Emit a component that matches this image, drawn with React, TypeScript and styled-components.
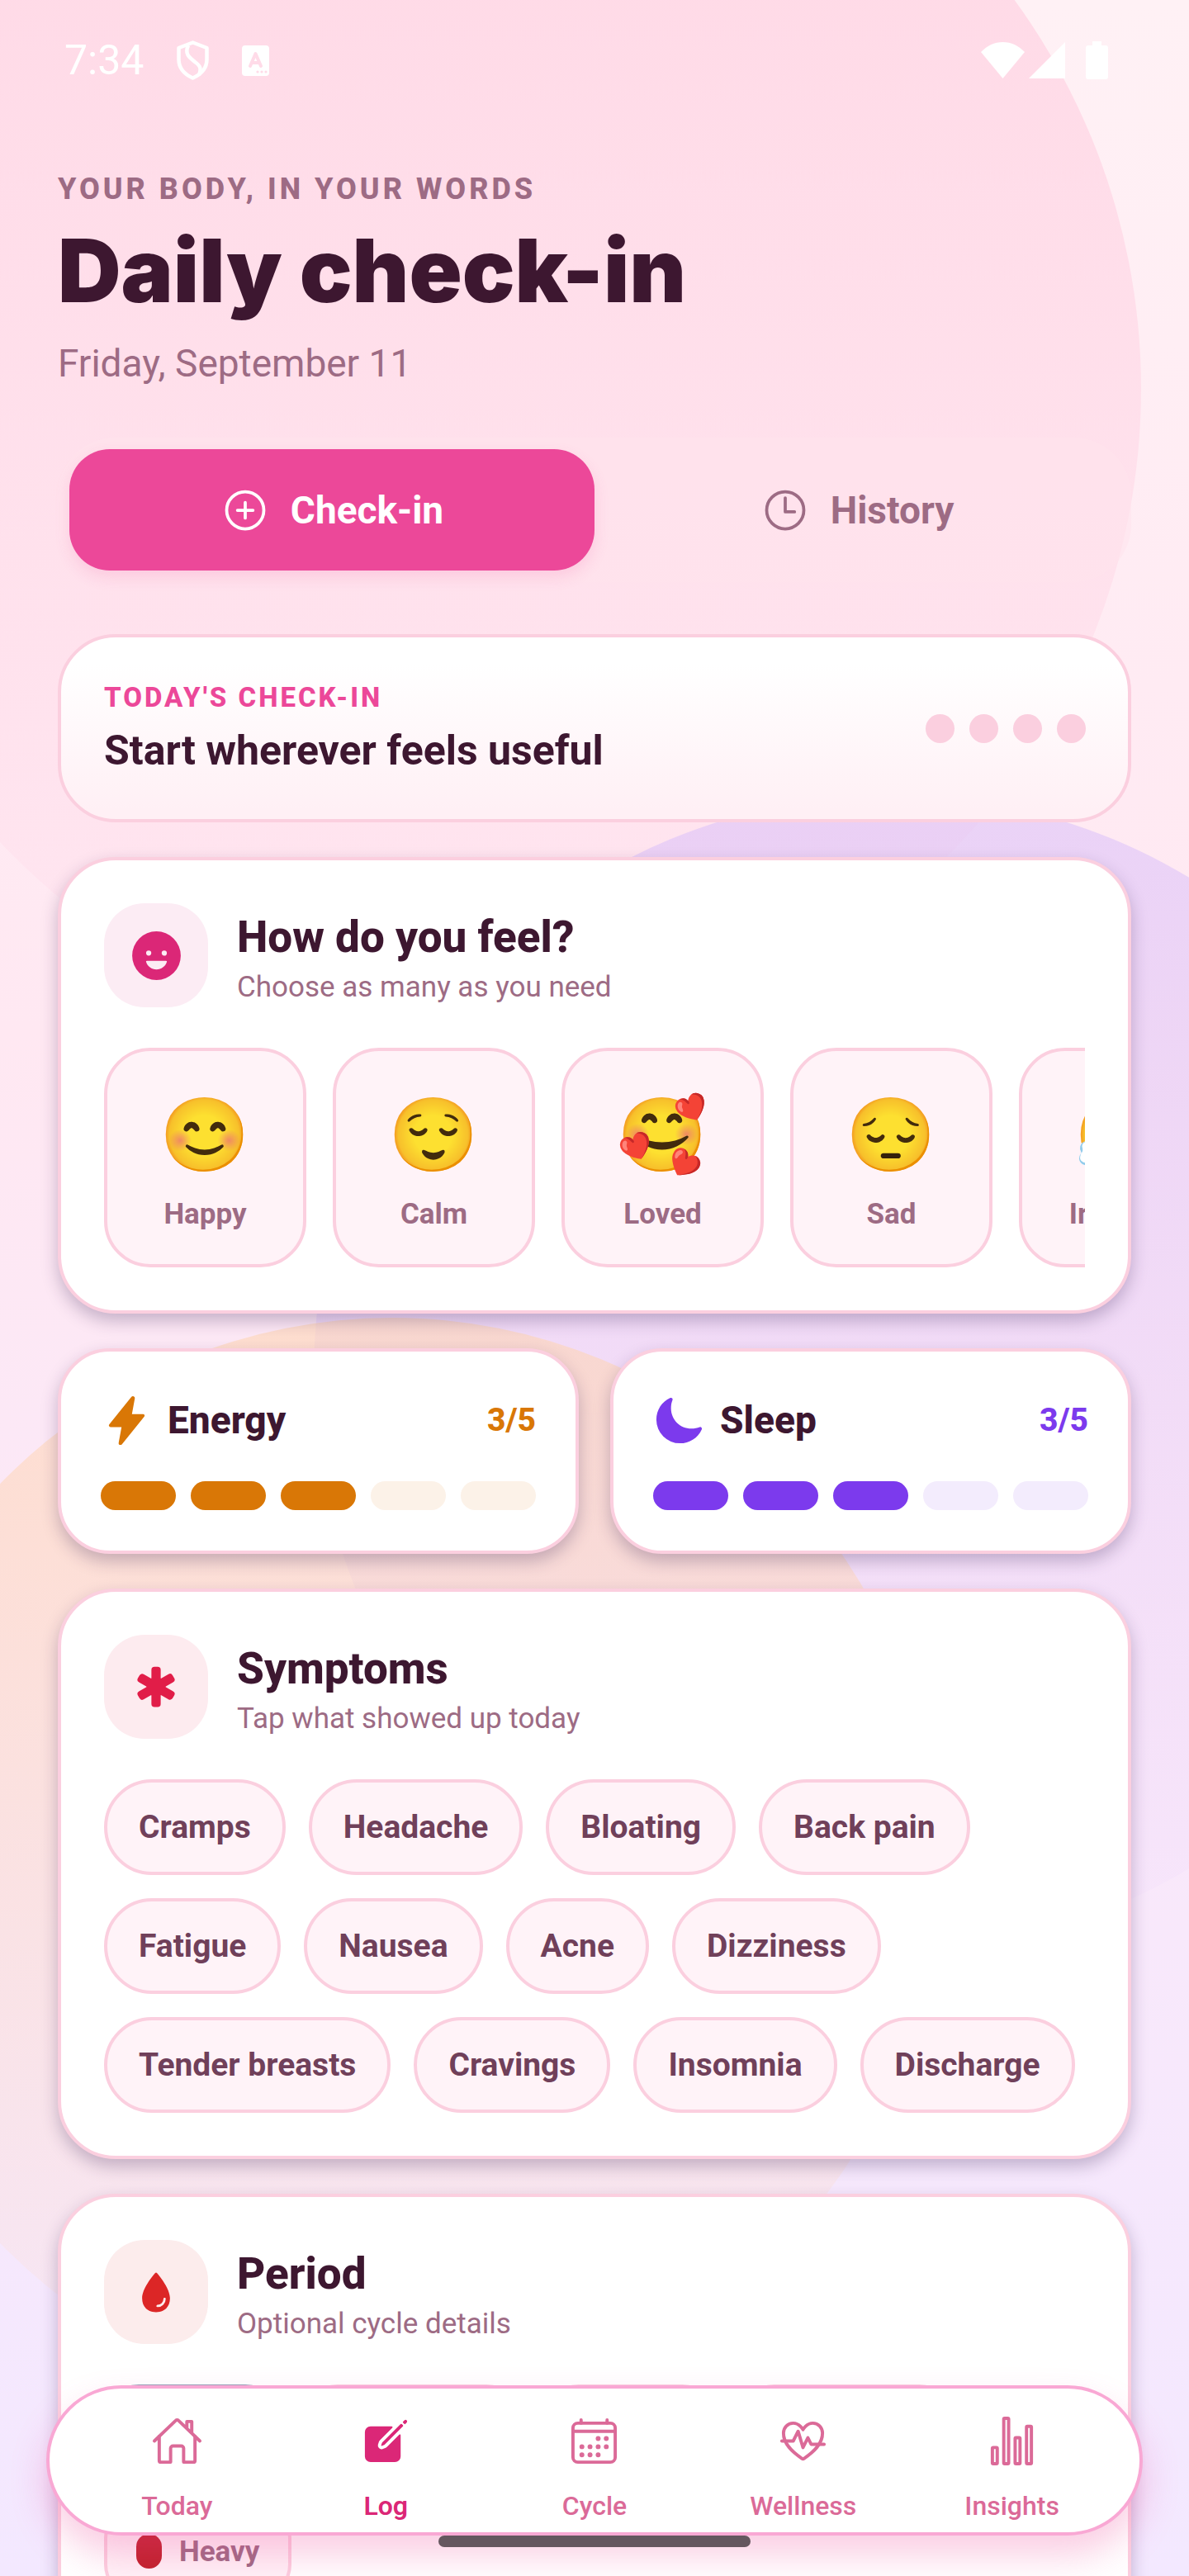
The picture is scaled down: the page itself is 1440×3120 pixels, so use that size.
import React from "react";
import styled, { createGlobalStyle } from "styled-components";
import {
  IoAddCircleOutline,
  IoTimeOutline,
  IoHappy,
  IoFlash,
  IoMoon,
  IoMedical,
  IoWater,
  IoHomeOutline,
  IoCreate,
  IoCalendarOutline,
  IoFitnessOutline,
  IoStatsChartOutline,
} from "react-icons/io5";

const ink = "#3d1730";
const muted = "#9d6b84";
const line = "#fbcfdf";
const blush = "#fff3f8";
const lift = "0 9px 20px rgba(50, 30, 80, 0.27)";

const GlobalStyle = createGlobalStyle`
  *, *::before, *::after { box-sizing: border-box; }
  body {
    margin: 0;
    font-family: Roboto, "Liberation Sans", sans-serif;
    color: ${ink};
  }
  button { font: inherit; color: inherit; border: 0; background: none; padding: 0; cursor: pointer; }
  h1, h2, p { margin: 0; }
  svg { display: block; flex: none; }
`;

const Screen = styled.div`
  position: relative;
  height: 100vh;
  overflow: hidden;
  background: linear-gradient(180deg, #fff1f5 0%, #ffe8f2 40%, #f8e8fb 75%, #f3e8ff 100%);
`;

const Blob = styled.div<{ $x: number; $y: number; $size: number; $fill: string }>`
  position: absolute;
  left: ${(p) => p.$x}px;
  top: ${(p) => p.$y}px;
  width: ${(p) => p.$size}px;
  height: ${(p) => p.$size}px;
  border-radius: 50%;
  background: ${(p) => p.$fill};
`;

const StatusBar = styled.header`
  position: relative;
  display: flex;
  justify-content: space-between;
  align-items: center;
  height: 146px;
  padding: 0 98px 0 78px;
  color: #fff;
`;

const StatusGroup = styled.div<{ $gap: number }>`
  display: flex;
  align-items: center;
  gap: ${(p) => p.$gap}px;
`;

const Clock = styled.span`
  font-size: 50px;
  line-height: 60px;
`;

const Content = styled.main`
  position: relative;
  display: flex;
  flex-direction: column;
  gap: 42px;
  padding: 60px 70px 0;
`;

const Heading = styled.div`
  display: flex;
  flex-direction: column;
`;

const Overline = styled.p`
  font-size: 36px;
  line-height: 46px;
  font-weight: 800;
  letter-spacing: 4px;
  color: ${muted};
`;

const Title = styled.h1`
  font-family: Inter, "Liberation Sans", sans-serif;
  font-size: 106px;
  line-height: 128px;
  font-weight: 900;
  margin-top: 12px;
`;

const DateLine = styled.p`
  font-size: 46px;
  line-height: 56px;
  margin-top: 20px;
  color: ${muted};
`;

const Tabs = styled.div`
  display: grid;
  grid-template-columns: 1fr 1fr;
  padding: 14px;
  margin-top: 20px;
  border-radius: 70px;
  background: rgba(255, 228, 236, 0.55);
`;

const Tab = styled.button<{ $on?: boolean }>`
  && {
    display: flex;
    align-items: center;
    justify-content: center;
    gap: 25px;
    height: 147px;
    border-radius: 49px;
    font-size: 46px;
    font-weight: 700;
    color: ${(p) => (p.$on ? "#fff" : muted)};
    background: ${(p) => (p.$on ? "#ec4899" : "transparent")};
    box-shadow: ${(p) => (p.$on ? "0 8px 18px rgba(236, 72, 153, 0.16)" : "none")};
  }
`;

const Summary = styled.section`
  display: flex;
  align-items: center;
  justify-content: space-between;
  height: 228px;
  margin-top: 21px;
  padding: 0 51px 0 52px;
  border: 4px solid ${line};
  border-radius: 70px;
  background: linear-gradient(180deg, #fff 15%, #fff0f5 95%);
`;

const SummaryLabel = styled.p`
  font-size: 33px;
  line-height: 40px;
  font-weight: 800;
  letter-spacing: 3px;
  color: #ec4899;
`;

const SummaryText = styled.p`
  margin-top: 14px;
  font-size: 50px;
  line-height: 60px;
  font-weight: 700;
`;

const Dots = styled.div`
  display: flex;
  gap: 18px;
`;

const Dot = styled.span`
  width: 35px;
  height: 35px;
  border-radius: 50%;
  background: ${line};
`;

const Card = styled.section`
  padding: 52px;
  border: 4px solid ${line};
  border-radius: 70px;
  background: #fff;
  box-shadow: ${lift};
`;

const CardHead = styled.div`
  display: flex;
  align-items: center;
  gap: 35px;
`;

const CardText = styled.div`
  padding-top: 7px;
`;

const Badge = styled.div<{ $fill: string; $color: string }>`
  display: grid;
  place-items: center;
  width: 126px;
  height: 126px;
  border-radius: 49px;
  background: ${(p) => p.$fill};
  color: ${(p) => p.$color};
`;

const CardTitle = styled.h2`
  font-size: 53px;
  line-height: 64px;
  font-weight: 800;
`;

const CardHint = styled.p`
  font-size: 35px;
  line-height: 46px;
  margin-top: 6px;
  color: ${muted};
`;

const MoodRow = styled.div`
  display: flex;
  gap: 32px;
  margin-top: 49px;
  overflow: hidden;
`;

const Mood = styled.button`
  && {
    flex: none;
    display: flex;
    flex-direction: column;
    align-items: center;
    width: 245px;
    height: 266px;
    padding-top: 52px;
    border: 4px solid ${line};
    border-radius: 56px;
    background: ${blush};
    color: ${muted};
    font-size: 35px;
    line-height: 46px;
    font-weight: 700;
  }
`;

const Emoji = styled.span`
  font-family: "Noto Color Emoji", sans-serif;
  font-size: 88px;
  line-height: 100px;
  height: 100px;
  margin-bottom: 23px;
  font-weight: 400;
`;

const Pair = styled.div`
  display: grid;
  grid-template-columns: 1fr 1fr;
  gap: 38px;
`;

const Meter = styled.section`
  padding: 51px 48px 49px;
  border: 4px solid ${line};
  border-radius: 63px;
  background: #fff;
  box-shadow: ${lift};
`;

const MeterHead = styled.div<{ $color: string }>`
  display: flex;
  align-items: center;
  gap: 18px;
  height: 64px;
  color: ${(p) => p.$color};
`;

const MeterTitle = styled.h2`
  flex: 1;
  font-size: 46px;
  line-height: 56px;
  font-weight: 800;
  color: ${ink};
`;

const Score = styled.span`
  font-size: 39px;
  line-height: 48px;
  font-weight: 800;
`;

const Steps = styled.div`
  display: grid;
  grid-template-columns: repeat(5, 1fr);
  gap: 18px;
  margin-top: 42px;
`;

const Step = styled.button<{ $fill: string }>`
  && {
    height: 35px;
    border-radius: 18px;
    background: ${(p) => p.$fill};
  }
`;

const Chips = styled.div`
  display: flex;
  flex-wrap: wrap;
  gap: 28px;
  margin-top: 49px;
`;

const Chip = styled.button`
  && {
    display: flex;
    align-items: center;
    height: 116px;
    padding: 0 38px;
    border: 4px solid ${line};
    border-radius: 58px;
    background: ${blush};
    color: #70405a;
    font-size: 39px;
    font-weight: 700;
  }
`;

const FlowChip = styled(Chip)<{ $edge: string }>`
  && {
    gap: 21px;
    padding: 0 35px;
    border-color: ${(p) => p.$edge};
    border-radius: 42px;
    color: ${muted};
    font-size: 35px;
  }
`;

const FlowMark = styled.span<{ $fill: string }>`
  width: 31px;
  height: 42px;
  border-radius: 16px;
  background: ${(p) => p.$fill};
`;

const NavBar = styled.nav`
  position: absolute;
  left: 56px;
  right: 56px;
  bottom: 49px;
  display: grid;
  grid-template-columns: repeat(5, 1fr);
  height: 182px;
  padding: 0 28px;
  border: 4px solid #f9a8d4;
  border-radius: 91px;
  background: #fff;
  box-shadow: 0 24px 44px rgba(236, 72, 153, 0.27);
`;

const NavItem = styled.a<{ $on?: boolean }>`
  display: flex;
  flex-direction: column;
  align-items: center;
  gap: 26px;
  padding-top: 32px;
  font-size: 32px;
  line-height: 42px;
  font-weight: ${(p) => (p.$on ? 600 : 500)};
  text-decoration: none;
  color: ${(p) => (p.$on ? "#db2777" : "#db6a98")};
`;

const HomeHandle = styled.div`
  position: absolute;
  left: 50%;
  bottom: 35px;
  width: 378px;
  height: 14px;
  margin-left: -189px;
  border-radius: 7px;
  background: #65575f;
`;

const moods = [
  ["😊", "Happy"],
  ["😌", "Calm"],
  ["🥰", "Loved"],
  ["😔", "Sad"],
  ["😤", "Irritable"],
];

const symptoms = [
  "Cramps", "Headache", "Bloating", "Back pain",
  "Fatigue", "Nausea", "Acne", "Dizziness",
  "Tender breasts", "Cravings", "Insomnia", "Discharge",
];

const flows = [
  ["None", "#94a3b8", "#94a3b8"],
  ["Spotting", "#f9a8d4", line],
  ["Light", "#f472b6", line],
  ["Medium", "#ef4444", line],
  ["Heavy", "#c0202a", line],
];

function MeterCard({ title, icon, color, soft, value }: {
  title: string; icon: React.ReactNode; color: string; soft: string; value: number;
}) {
  return (
    <Meter>
      <MeterHead $color={color}>
        {icon}
        <MeterTitle>{title}</MeterTitle>
        <Score>{value}/5</Score>
      </MeterHead>
      <Steps>
        {[1, 2, 3, 4, 5].map((n) => (
          <Step key={n} aria-label={`${title} ${n}`} $fill={n <= value ? color : soft} />
        ))}
      </Steps>
    </Meter>
  );
}

function SectionHead({ title, hint, icon, fill, color }: {
  title: string; hint: string; icon: React.ReactNode; fill: string; color: string;
}) {
  return (
    <CardHead>
      <Badge $fill={fill} $color={color}>{icon}</Badge>
      <CardText>
        <CardTitle>{title}</CardTitle>
        <CardHint>{hint}</CardHint>
      </CardText>
    </CardHead>
  );
}

export default function App() {
  return (
    <>
      <GlobalStyle />
      <Screen>
        <Blob $x={-218} $y={-329} $size={1600} $fill="linear-gradient(180deg, rgba(255,192,215,0.46) 20%, rgba(255,205,225,0.12) 95%)" />
        <Blob $x={380} $y={963} $size={1400} $fill="linear-gradient(180deg, rgba(216,190,250,0.54) 0%, rgba(240,215,250,0.12) 100%)" />
        <Blob $x={-186} $y={1596} $size={1322} $fill="linear-gradient(180deg, rgba(255,212,175,0.55) 0%, rgba(255,225,218,0.2) 100%)" />

        <StatusBar>
          <StatusGroup $gap={40}>
            <Clock>7:34</Clock>
            <svg width="39" height="48" viewBox="0 0 39 48" fill="none" stroke="#fff" strokeWidth="4.500" strokeLinejoin="round">
              <path d="M19.500 2.500 36.500 9v14c0 11-7 18-17 22.500C9.500 41 2.500 34 2.500 23V9Z" />
              <path d="M14 6c-5 11 2 15 8 20 7 5 8 8 5 16" />
            </svg>
            <svg width="33" height="37" viewBox="0 0 33 37">
              <rect width="33" height="37" rx="4" fill="#fff" />
              <path d="M10 25 16.500 10 23 25M12.500 21h8" fill="none" stroke="#ffdbe8" strokeWidth="4" strokeLinecap="round" strokeLinejoin="round" />
              <g fill="#ffdbe8"><circle cx="19" cy="32" r="1.600" /><circle cx="24" cy="32" r="1.600" /><circle cx="29" cy="32" r="1.600" /></g>
            </svg>
          </StatusGroup>
          <StatusGroup $gap={5}>
            <svg width="53" height="44" viewBox="0 0 53 44"><path fill="#fff" d="M26.500 44 0 12C8 4 16 0 26.500 0S45 4 53 12Z" /></svg>
            <svg width="44" height="44" viewBox="0 0 44 44"><path fill="#fff" d="M44 0v44H0Z" /></svg>
            <svg width="47" height="46" viewBox="0 0 47 46"><path fill="#fff" d="M28 5V0h11v5h5q3 0 3 3v35q0 3-3 3H23q-3 0-3-3V8q0-3 3-3Z" /></svg>
          </StatusGroup>
        </StatusBar>

        <Content>
          <Heading>
            <Overline>YOUR BODY, IN YOUR WORDS</Overline>
            <Title>Daily check-in</Title>
            <DateLine>Friday, September 11</DateLine>
          </Heading>

          <Tabs>
            <Tab $on><IoAddCircleOutline size={60} />Check-in</Tab>
            <Tab><IoTimeOutline size={60} />History</Tab>
          </Tabs>

          <Summary>
            <div>
              <SummaryLabel>TODAY'S CHECK-IN</SummaryLabel>
              <SummaryText>Start wherever feels useful</SummaryText>
            </div>
            <Dots><Dot /><Dot /><Dot /><Dot /></Dots>
          </Summary>

          <Card>
            <SectionHead title="How do you feel?" hint="Choose as many as you need" icon={<IoHappy size={67} />} fill="#fcecf4" color="#db2777" />
            <MoodRow>
              {moods.map(([face, name]) => (
                <Mood key={name}><Emoji>{face}</Emoji>{name}</Mood>
              ))}
            </MoodRow>
          </Card>

          <Pair>
            <MeterCard title="Energy" icon={<IoFlash size={63} />} color="#d97706" soft="#fcf2e8" value={3} />
            <MeterCard title="Sleep" icon={<IoMoon size={63} />} color="#7c3aed" soft="#f3ecfd" value={3} />
          </Pair>

          <Card>
            <SectionHead title="Symptoms" hint="Tap what showed up today" icon={<IoMedical size={60} />} fill="#fdebef" color="#e11d48" />
            <Chips>
              {symptoms.map((s) => <Chip key={s}>{s}</Chip>)}
            </Chips>
          </Card>

          <Card>
            <SectionHead title="Period" hint="Optional cycle details" icon={<IoWater size={60} />} fill="#fcecec" color="#dc2626" />
            <Chips>
              {flows.map(([name, fill, edge]) => (
                <FlowChip key={name} $edge={edge}>
                  <FlowMark $fill={fill} />{name}
                </FlowChip>
              ))}
            </Chips>
          </Card>
        </Content>

        <NavBar>
          <NavItem href="#today"><IoHomeOutline size={63} />Today</NavItem>
          <NavItem href="#log" $on><IoCreate size={63} />Log</NavItem>
          <NavItem href="#cycle"><IoCalendarOutline size={63} />Cycle</NavItem>
          <NavItem href="#wellness"><IoFitnessOutline size={63} />Wellness</NavItem>
          <NavItem href="#insights"><IoStatsChartOutline size={63} />Insights</NavItem>
        </NavBar>
        <HomeHandle />
      </Screen>
    </>
  );
}
